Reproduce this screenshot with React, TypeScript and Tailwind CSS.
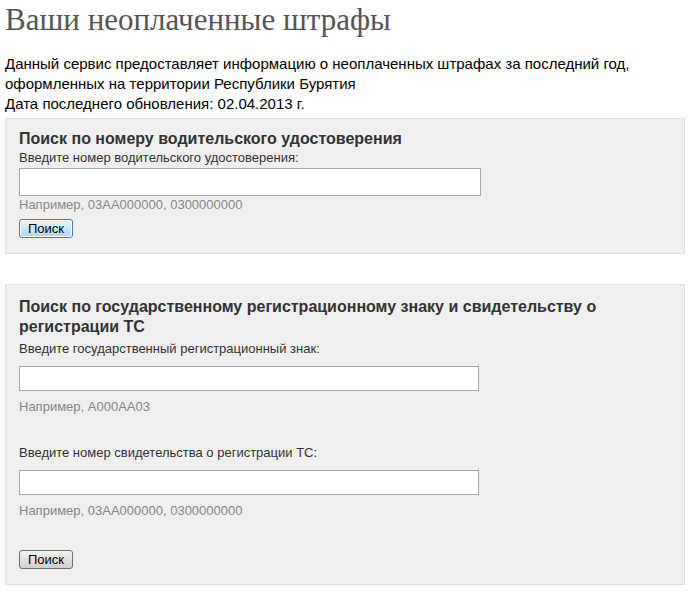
export default function App() {
  return (
    <div className="min-h-[598px] bg-white px-[5px] font-['Liberation_Sans',Arial,sans-serif] text-black">
      <h1 className="pt-[3px] font-['Liberation_Serif','Times_New_Roman',serif] text-[31px] leading-[34px] text-[#555]">
        Ваши неоплаченные штрафы
      </h1>
      <p className="mt-[17px] text-[15px] leading-[20px]">
        Данный сервис предоставляет информацию о неоплаченных штрафах за последний год,
        <br />
        оформленных на территории Республики Бурятия
        <br />
        Дата последнего обновления: 02.04.2013 г.
      </p>

      <section className="mt-[4px] w-[680px] border border-[#e0e0e0] bg-[#efefef] px-[13px] pt-[9px] pb-[13px]">
        <h2 className="text-[16px] font-bold leading-[22px] text-[#333]">
          Поиск по номеру водительского удостоверения
        </h2>
        <label className="block text-[13px] leading-[16px] text-[#333]">
          Введите номер водительского удостоверения:
        </label>
        <input
          type="text"
          className="mt-[2px] block h-[28px] w-[462px] border border-[#a9a9a9] bg-white"
        />
        <div className="text-[13px] leading-[18px] text-[#888]">Например, 03АА000000, 0300000000</div>
        <button className="mt-[5px] h-[19px] rounded-[3px] border border-[#3c7fb1] bg-gradient-to-b from-[#eaf6fd] to-[#a7d9f5] px-[8px] text-[13px] leading-[15px] text-black shadow-[inset_0_0_0_1px_#fff]">
          Поиск
        </button>
      </section>

      <section className="mt-[30px] w-[680px] border border-[#e0e0e0] bg-[#efefef] px-[13px] pt-[12px] pb-[13px]">
        <h2 className="w-[620px] text-[16px] font-bold leading-[20px] text-[#333]">
          Поиск по государственному регистрационному знаку и свидетельству о регистрации ТС
        </h2>
        <label className="mt-[4px] block text-[13px] leading-[16px] text-[#333]">
          Введите государственный регистрационный знак:
        </label>
        <input
          type="text"
          className="mt-[9px] block h-[25px] w-[460px] border border-[#a9a9a9] bg-white"
        />
        <div className="mt-[8px] text-[13px] leading-[16px] text-[#888]">Например, А000АА03</div>
        <label className="mt-[30px] block text-[13px] leading-[16px] text-[#333]">
          Введите номер свидетельства о регистрации ТС:
        </label>
        <input
          type="text"
          className="mt-[9px] block h-[25px] w-[460px] border border-[#a9a9a9] bg-white"
        />
        <div className="mt-[8px] text-[13px] leading-[16px] text-[#888]">Например, 03АА000000, 0300000000</div>
        <button className="mt-[31px] h-[19px] rounded-[3px] border border-[#707070] bg-gradient-to-b from-[#f2f2f2] to-[#cfcfcf] px-[8px] text-[13px] leading-[15px] text-black">
          Поиск
        </button>
      </section>
    </div>
  );
}
